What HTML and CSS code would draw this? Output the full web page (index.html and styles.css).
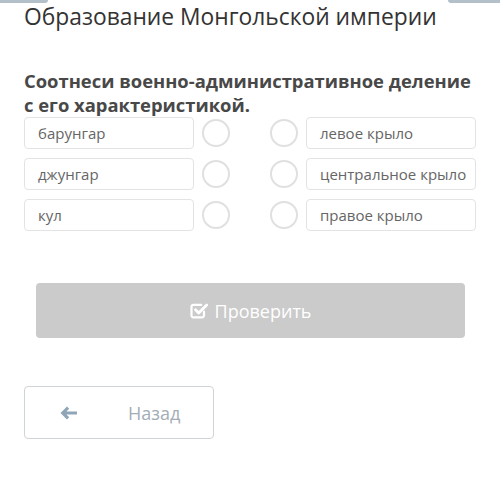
FILE: index.html
```html
<!DOCTYPE html>
<html lang="ru">
<head>
    <meta charset="UTF-8">
    <meta name="viewport" content="width=device-width, initial-scale=1.0">
    <title>Образование Монгольской империи</title>
    <link rel="stylesheet" href="styles.css">
</head>
<body>
    <!-- edges of the nav buttons scrolled off above -->
    <div class="top-edges">
        <span class="edge edge-left"></span>
        <span class="edge edge-right"></span>
    </div>

    <main class="task">
        <h1 class="task-title">Образование Монгольской империи</h1>

        <p class="question">Соотнеси военно-административное деление с его характеристикой.</p>

        <div class="match-grid">
            <div class="match-item">барунгар</div>
            <span class="dot"></span>
            <span class="dot dot-right"></span>
            <div class="match-item">левое крыло</div>

            <div class="match-item">джунгар</div>
            <span class="dot"></span>
            <span class="dot dot-right"></span>
            <div class="match-item">центральное крыло</div>

            <div class="match-item">кул</div>
            <span class="dot"></span>
            <span class="dot dot-right"></span>
            <div class="match-item">правое крыло</div>
        </div>

        <div class="check-wrap">
            <button class="check-button" disabled>
                <svg class="check-icon" width="19" height="17" viewBox="0 0 19 17" fill="none" stroke="currentColor" stroke-width="2.2" stroke-linecap="round" stroke-linejoin="round">
                    <path d="M14 9.5v4a1.8 1.8 0 0 1-1.8 1.8H3.3a1.8 1.8 0 0 1-1.8-1.8V4.6a1.8 1.8 0 0 1 1.8-1.8h8"></path>
                    <path d="M5.5 7.8l3.2 3.2 8-8" stroke-width="2.8"></path>
                </svg>
                Проверить
            </button>
        </div>

        <a href="#" class="back-button">
            <svg class="back-icon" width="20" height="16" viewBox="0 0 20 16" fill="currentColor">
                <path d="M8 1.5 1.5 8 8 14.5l2.2-2.2-2.8-2.8H18v-3H7.4l2.8-2.8z"></path>
            </svg>
            <span>Назад</span>
        </a>
    </main>
</body>
</html>
```

FILE: styles.css
```css
* {
    box-sizing: border-box;
}

body {
    margin: 0;
    background: #fff;
    font-family: "Open Sans", "Noto Sans", sans-serif;
    color: #333;
}

.top-edges {
    display: flex;
    justify-content: space-between;
    height: 3px;
}

.edge {
    display: block;
    height: 3px;
    background: #b3bfc9;
}

.edge-left {
    width: 48px;
    border-bottom-right-radius: 3px;
}

.edge-right {
    width: 52px;
    border-bottom-left-radius: 3px;
}

.task {
    padding: 0 24px;
}

.task-title {
    margin: 0;
    font-size: 22.8px;
    font-weight: 400;
    line-height: 28px;
    color: #333;
    white-space: nowrap;
}

.question {
    margin: 38px 0 0;
    font-size: 18.4px;
    font-weight: 700;
    line-height: 24px;
    color: #484848;
}

/* two columns of cards with a pair of connector dots between */
.match-grid {
    display: grid;
    grid-template-columns: 170px 28px 60px 170px;
    grid-auto-rows: 32px;
    column-gap: 8px;
    row-gap: 9px;
    align-items: center;
}

.match-item {
    height: 32px;
    display: flex;
    align-items: center;
    padding: 0 13px;
    border: 1px solid #e3e3e3;
    border-radius: 4px;
    font-size: 15px;
    color: #666;
    white-space: nowrap;
}

.dot {
    width: 28px;
    height: 28px;
    border: 2px solid #e0e0e0;
    border-radius: 50%;
}

.dot-right {
    justify-self: end;
}

.check-wrap {
    padding: 0 11px 0 12px;
    margin-top: 52px;
}

.check-button {
    width: 100%;
    height: 55px;
    display: flex;
    align-items: center;
    justify-content: center;
    gap: 6px;
    border: none;
    border-radius: 4px;
    background: #cbcbcb;
    color: #fff;
    font-family: inherit;
    font-size: 18px;
}

.check-icon {
    margin-top: -1px;
}

.back-button {
    margin-top: 48px;
    width: 190px;
    height: 53px;
    display: flex;
    align-items: center;
    padding-left: 34px;
    border: 1px solid #cfd4d8;
    border-radius: 4px;
    text-decoration: none;
    color: #a3adb6;
    font-size: 18px;
}

.back-icon {
    color: #8fa5b8;
}

.back-button span {
    margin-left: 49px;
}
```
